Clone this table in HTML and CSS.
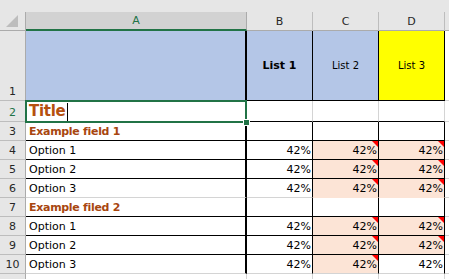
FILE: index.html
```html
<!DOCTYPE html>
<html>
<head>
<meta charset="utf-8">
<link rel="stylesheet" href="styles.css">
</head>
<body>
<div class="sheet">
  <div class="topband"></div>
  <div class="grid">
    <!-- header row -->
    <div class="c corner"><svg width="14" height="14" viewBox="0 0 14 14"><polygon points="12,1 12,13 0,13" fill="#bdbdbd"/></svg></div>
    <div class="c ch selcol">A</div>
    <div class="c ch">B</div>
    <div class="c ch">C</div>
    <div class="c ch">D</div>
    <div class="c ch last"></div>

    <!-- row 1 -->
    <div class="c rh bottom">1</div>
    <div class="c blue thick"></div>
    <div class="c blue br bb center bold">List 1</div>
    <div class="c blue br bb center small">List 2</div>
    <div class="c yellow br bb center small">List 3</div>
    <div class="c"></div>

    <!-- row 2 -->
    <div class="c rh selrow">2</div>
    <div class="c thick title">Title<span class="cursor"></span></div>
    <div class="c bb"></div>
    <div class="c bb"></div>
    <div class="c bb"></div>
    <div class="c"></div>

    <!-- row 3 -->
    <div class="c rh">3</div>
    <div class="c thick bb brown">Example field 1</div>
    <div class="c br bb"></div>
    <div class="c br bb"></div>
    <div class="c br bb"></div>
    <div class="c"></div>

    <!-- row 4 -->
    <div class="c rh">4</div>
    <div class="c thick bb">Option 1</div>
    <div class="c br bb num">42%</div>
    <div class="c br bb num peach flag">42%</div>
    <div class="c br bb num peach flag">42%</div>
    <div class="c"></div>

    <!-- row 5 -->
    <div class="c rh">5</div>
    <div class="c thick bb">Option 2</div>
    <div class="c br bb num">42%</div>
    <div class="c br bb num peach flag">42%</div>
    <div class="c br bb num peach flag">42%</div>
    <div class="c"></div>

    <!-- row 6 -->
    <div class="c rh">6</div>
    <div class="c thick">Option 3</div>
    <div class="c br num">42%</div>
    <div class="c br num peach pb flag">42%</div>
    <div class="c br num peach pb flag">42%</div>
    <div class="c"></div>

    <!-- row 7 -->
    <div class="c rh">7</div>
    <div class="c thick bb brown">Example filed 2</div>
    <div class="c br bb"></div>
    <div class="c br bb"></div>
    <div class="c br bb"></div>
    <div class="c"></div>

    <!-- row 8 -->
    <div class="c rh">8</div>
    <div class="c thick bb">Option 1</div>
    <div class="c br bb num">42%</div>
    <div class="c br bb num peach flag">42%</div>
    <div class="c br bb num peach flag">42%</div>
    <div class="c"></div>

    <!-- row 9 -->
    <div class="c rh">9</div>
    <div class="c thick bb">Option 2</div>
    <div class="c br bb num">42%</div>
    <div class="c br bb num peach flag">42%</div>
    <div class="c br bb num peach flag">42%</div>
    <div class="c"></div>

    <!-- row 10 -->
    <div class="c rh">10</div>
    <div class="c thick">Option 3</div>
    <div class="c br num">42%</div>
    <div class="c br num peach flag">42%</div>
    <div class="c br num">42%</div>
    <div class="c"></div>

    <!-- row 11 (partially visible) -->
    <div class="c rh"></div>
    <div class="c"></div>
    <div class="c"></div>
    <div class="c"></div>
    <div class="c"></div>
    <div class="c"></div>

    <div class="selection"><span class="handle"></span></div>
  </div>
</div>
</body>
</html>
```

FILE: styles.css
```css
html, body {
  margin: 0;
  padding: 0;
  background: #e6e6e6;
}

.sheet {
  width: 449px;
  height: 279px;
  overflow: hidden;
  background: #e6e6e6;
  font-family: "DejaVu Sans", sans-serif;
  color: #000;
}

.topband {
  height: 12px;
}

.grid {
  position: relative;
  display: grid;
  grid-template-columns: 26px 221px 66px 66px 66px 30px;
  grid-template-rows: 19px 70px 21px repeat(8, 19px) 19px;
  background: #fff;
}

.c {
  box-sizing: border-box;
  border-right: 1px solid #d4d4d4;
  border-bottom: 1px solid #d4d4d4;
  font-size: 11px;
  line-height: 17px;
  padding: 0 2px 0 3px;
  white-space: nowrap;
  overflow: hidden;
  display: flex;
  align-items: flex-end;
  position: relative;
}

.corner {
  background: #e6e6e6;
  border-right-color: #ababab;
  border-bottom-color: #ababab;
  padding: 0;
  align-items: center;
  justify-content: center;
}

.ch {
  background: #e6e6e6;
  border-right-color: #bdbdbd;
  border-bottom-color: #ababab;
  justify-content: center;
  align-items: center;
  color: #262626;
  padding: 0;
}

.ch.selcol {
  background: #d2d2d2;
  color: #217346;
  border-bottom: 2px solid #217346;
  border-right-color: #ababab;
}

.rh {
  background: #e6e6e6;
  border-right-color: #ababab;
  border-bottom-color: #bdbdbd;
  justify-content: center;
  color: #262626;
  padding: 0;
}

.rh.selrow {
  color: #217346;
}

.rh.bottom {
  align-items: flex-end;
}

.thick {
  border-right: 2px solid #000;
}

.br {
  border-right-color: #000;
}

.bb {
  border-bottom-color: #000;
}

.blue {
  background: #b4c6e7;
}

.yellow {
  background: #ffff00;
}

.peach {
  background: #fce4d6;
}

.pb {
  border-bottom-color: #fce4d6;
}

.center {
  justify-content: center;
  align-items: center;
  padding: 0;
}

.bold {
  font-weight: bold;
}

.small {
  font-size: 10px;
}

.num {
  justify-content: flex-end;
  padding-right: 1px;
}

.flag::after {
  content: "";
  position: absolute;
  top: 0;
  right: 0;
  width: 0;
  height: 0;
  border-top: 6px solid #ff0000;
  border-left: 6px solid transparent;
}

.brown {
  color: #a8460f;
  font-weight: bold;
  letter-spacing: -0.3px;
}

.title {
  color: #b5500f;
  font-weight: bold;
  font-size: 15px;
  letter-spacing: -0.3px;
  line-height: 19px;
}

.cursor {
  display: inline-block;
  width: 0;
  height: 18px;
  border-left: 1px solid #000;
  margin-left: 2px;
  align-self: flex-end;
}

.selection {
  position: absolute;
  left: 25px;
  top: 88px;
  width: 222px;
  height: 23px;
  box-sizing: border-box;
  border: 2px solid #217346;
  pointer-events: none;
}

.handle {
  position: absolute;
  right: -4px;
  bottom: -4px;
  width: 5px;
  height: 5px;
  background: #217346;
  outline: 1px solid #fff;
}
```
